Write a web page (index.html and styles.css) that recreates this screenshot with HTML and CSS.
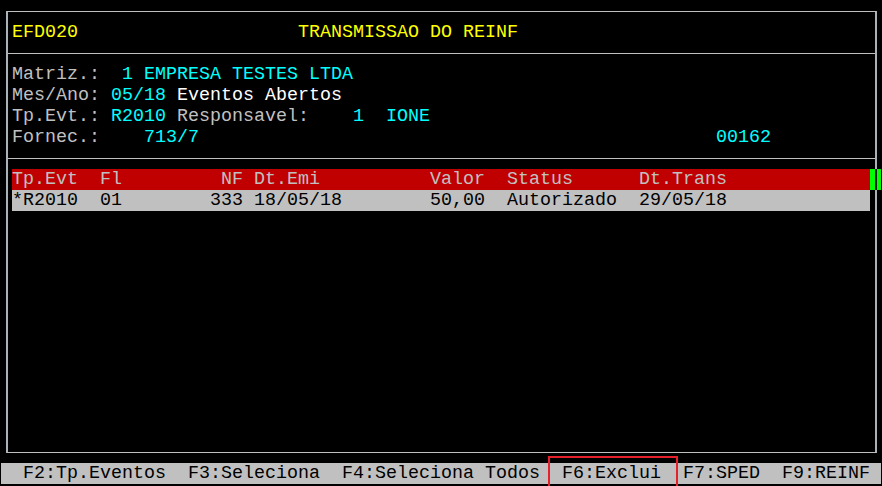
FILE: index.html
```html
<!DOCTYPE html>
<html lang="pt">

<head>
  <meta charset="UTF-8">
  <meta name="viewport" content="width=device-width, initial-scale=1.0">
  <title>EFD020 - Transmissao do REINF</title>
  <link rel="stylesheet" href="styles.css">
</head>

<body>
  <div id="screen">
    <div class="frame">
      <div class="row"><span class="yel">EFD020                    TRANSMISSAO DO REINF</span></div>
      <div class="rule"></div>
      <div class="row"><span class="lbl">Matriz.:</span>  <span class="cy">1 EMPRESA TESTES LTDA</span></div>
      <div class="row"><span class="lbl">Mes/Ano:</span> <span class="cy">05/18</span> <span class="wht">Eventos Abertos</span></div>
      <div class="row"><span class="lbl">Tp.Evt.:</span> <span class="cy">R2010</span> <span class="lbl">Responsavel:</span>    <span class="cy">1  IONE</span></div>
      <div class="row"><span class="lbl">Fornec.:</span>    <span class="cy">713/7                                               00162</span></div>
      <div class="rule"></div>
      <div class="grid-head">
        <div class="cells head">Tp.Evt  Fl         NF Dt.Emi          Valor  Status      Dt.Trans</div>
        <div class="mark"></div>
      </div>
      <div class="cells sel">*R2010  01        333 18/05/18        50,00  Autorizado  29/05/18</div>
    </div>
    <div class="keys">  F2:Tp.Eventos  F3:Seleciona  F4:Seleciona Todos  <span class="hl">F6:Exclui</span>  F7:SPED  F9:REINF</div>
  </div>
</body>

</html>
```

FILE: styles.css
```css
* {
  margin: 0;
  padding: 0;
  box-sizing: border-box;
}

body {
  background: #000;
  font-family: "Liberation Mono", "Courier New", monospace;
  font-size: 18.333px;
  line-height: 21px;
  color: #c0c0c0;
}

#screen {
  width: 882px;
  height: 486px;
  padding: 1px 0 0 1px;
  overflow: hidden;
}

.frame {
  width: 871px;
  height: 442px;
  margin: 10px 0 0 5px;
  padding: 10px 0 0 4px;
  border-top: 1px solid #c0c0c0;
  border-bottom: 1px solid #c0c0c0;
  border-left: 2px solid #a9b1b9;
  border-right: 2px solid #a9b1b9;
}

.row,
.cells,
.keys {
  height: 21px;
  white-space: pre;
}

.rule {
  height: 21px;
  margin-left: -4px;
  background: linear-gradient(#c0c0c0, #c0c0c0) 0 10px / 100% 1px no-repeat;
}

.yel {
  color: #ffff00;
}

.lbl {
  color: #c0c0c0;
}

.cy {
  color: #00ffff;
}

.wht {
  color: #ffffff;
}

.grid-head {
  display: flex;
}

.cells {
  width: 858px;
  flex-shrink: 0;
}

.head {
  background: #c00000;
  color: #c0c0c0;
}

.sel {
  background: #c0c0c0;
  color: #000;
}

.mark {
  flex-shrink: 0;
  width: 11px;
  height: 21px;
  background: linear-gradient(90deg, #00ff00 0 5px, #1a1a1a 5px 7px, #00ff00 7px);
}

.keys {
  width: 880px;
  margin-top: 10px;
  background: #c0c0c0;
  color: #000;
}

.hl {
  position: relative;
}

.hl::after {
  content: "";
  position: absolute;
  left: -14px;
  right: -17px;
  top: -7px;
  bottom: -7px;
  border: 2px solid #e5202a;
}
```
